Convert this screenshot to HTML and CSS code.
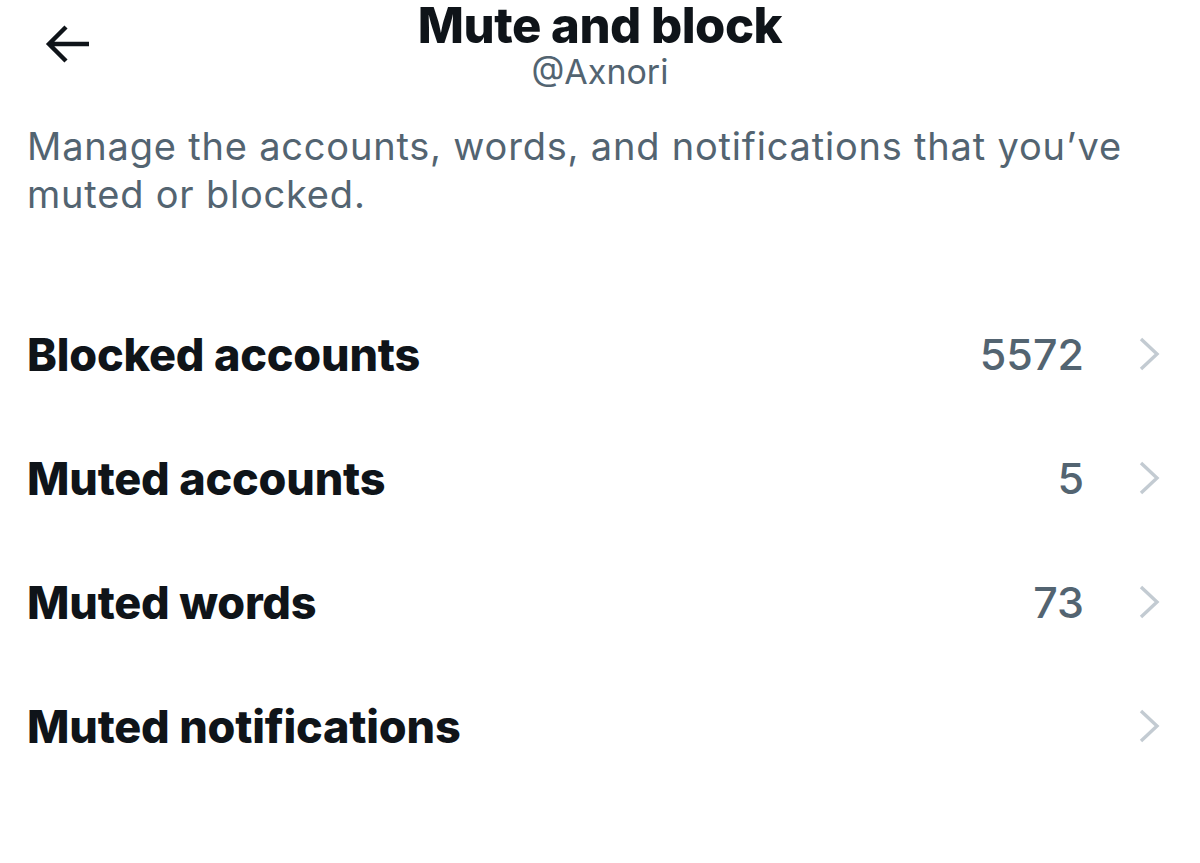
FILE: index.html
```html
<!DOCTYPE html>
<html>
<head>
<meta charset="utf-8">
<link rel="stylesheet" href="styles.css">
</head>
<body>
<div class="page">
  <header class="topbar">
    <div class="back">
      <svg width="48" height="42" viewBox="0 0 48 42"><path d="M45 21H5M22 4L5 21l17 17" fill="none" stroke="#0f1419" stroke-width="4.4"/></svg>
    </div>
    <div class="titles">
      <div class="title">Mute and block</div>
      <div class="handle">@Axnori</div>
    </div>
  </header>
  <p class="desc">Manage the accounts, words, and notifications that you’ve muted or blocked.</p>
  <ul class="list">
    <li class="row"><span class="label">Blocked accounts</span><span class="count">5572</span><svg class="chev" width="24" height="36" viewBox="0 0 24 36"><path d="M4 3l16 15L4 33" fill="none" stroke="#c3cbd2" stroke-width="3.4"/></svg></li>
    <li class="row"><span class="label">Muted accounts</span><span class="count">5</span><svg class="chev" width="24" height="36" viewBox="0 0 24 36"><path d="M4 3l16 15L4 33" fill="none" stroke="#c3cbd2" stroke-width="3.4"/></svg></li>
    <li class="row"><span class="label">Muted words</span><span class="count">73</span><svg class="chev" width="24" height="36" viewBox="0 0 24 36"><path d="M4 3l16 15L4 33" fill="none" stroke="#c3cbd2" stroke-width="3.4"/></svg></li>
    <li class="row"><span class="label">Muted notifications</span><span class="count"></span><svg class="chev" width="24" height="36" viewBox="0 0 24 36"><path d="M4 3l16 15L4 33" fill="none" stroke="#c3cbd2" stroke-width="3.4"/></svg></li>
  </ul>
</div>
</body>
</html>
```
FILE: styles.css
```css
* { box-sizing: border-box; }
html, body { margin: 0; padding: 0; background: #fff; }
body { font-family: Inter, "Liberation Sans", sans-serif; color: #0f1419; width: 1200px; height: 863px; overflow: hidden; }
.page { padding: 0 27px; }
.topbar { position: relative; height: 112px; display: flex; justify-content: center; }
.back { position: absolute; left: 17px; top: 23px; width: 48px; height: 42px; }
.back svg { display: block; }
.titles { display: flex; flex-direction: column; align-items: center; padding-top: 1px; }
.title { font-size: 49px; font-weight: 800; line-height: 50px; letter-spacing: -0.5px; }
.handle { font-size: 34px; color: #536471; line-height: 40px; margin-top: 1px; }
.desc { margin: 10px 0 0; font-size: 38px; line-height: 48px; color: #536471; letter-spacing: 0.8px; }
.list { list-style: none; margin: 74px 0 0; padding: 0; }
.row { display: flex; align-items: center; height: 124px; }
.label { flex: 1; font-size: 45px; font-weight: 800; letter-spacing: -0.2px; }
.count { font-size: 43px; font-weight: 500; color: #536471; margin-right: 53px; }
.chev { margin-right: 12px; }
```
